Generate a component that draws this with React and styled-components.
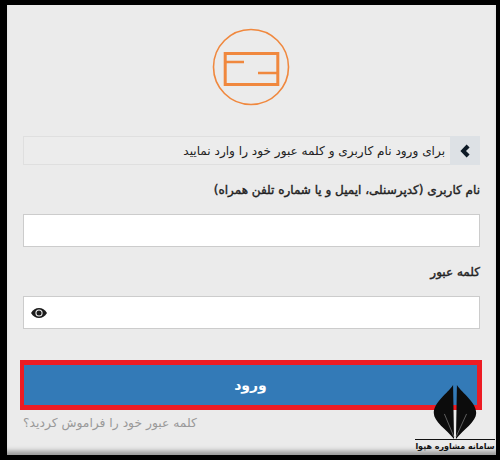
import React from "react";
import styled, { createGlobalStyle } from "styled-components";

const GlobalStyle = createGlobalStyle`
  html, body {
    margin: 0;
    padding: 0;
    background: #000;
  }
  * {
    box-sizing: border-box;
  }
`;

const App = () => {
  return (
    <>
      <GlobalStyle />
      <Page>
        <Panel dir="rtl">
          <LogoWrap>
            <svg width="78" height="78" viewBox="0 0 78 78" fill="none" stroke="#f0883e">
              <circle cx="39" cy="39" r="37.5" strokeWidth="1.6" />
              <rect x="13.2" y="25.5" width="52.6" height="31" strokeWidth="3" />
              <path d="M13 34H32M66 45H46" strokeWidth="2.4" />
            </svg>
          </LogoWrap>
          <Alert>
            <AlertIcon>
              <svg width="14" height="14" viewBox="0 0 14 14" fill="#0d1a26">
                <path d="M8.6 0.6L11.6 3.400 8 7l3.600 3.600-3 2.800L2.400 7z" />
              </svg>
            </AlertIcon>
            <AlertText>برای ورود نام کاربری و کلمه عبور خود را وارد نمایید</AlertText>
          </Alert>
          <Label>نام کاربری (کدپرسنلی، ایمیل و یا شماره تلفن همراه)</Label>
          <Input />
          <Label>کلمه عبور</Label>
          <PasswordInput>
            <svg width="18" height="12" viewBox="0 0 18 12">
              <path d="M1 6c2-3.400 4.800-5 8-5s6 1.600 8 5c-2 3.400-4.800 5-8 5S3 9.400 1 6z" fill="#1c1c1c" />
              <circle cx="9" cy="6" r="3.600" fill="#eee" />
              <circle cx="9" cy="6" r="2.500" fill="#1c1c1c" />
            </svg>
          </PasswordInput>
          <Highlight>
            <Submit>ورود</Submit>
          </Highlight>
          <Forgot>کلمه عبور خود را فراموش کردید؟</Forgot>
        </Panel>
        <Badge>
          <svg width="46" height="54" viewBox="0 0 46 56">
            <path d="M21 0C15 9 1 18 1 29c0 9 13 17 21 27z" fill="#0c0c0c" />
            <path d="M25 0C31 9 45 18 45 29c0 9-13 17-21 27z" fill="#0c0c0c" />
            <path d="M12 30l10 24M35 30L24 54" stroke="#777" strokeWidth="0.8" fill="none" />
          </svg>
          <BadgeText dir="rtl">سامانه مشاوره هپوا</BadgeText>
        </Badge>
      </Page>
    </>
  );
};

export default App;

const Page = styled.div`
  position: relative;
  width: 500px;
  height: 460px;
  padding: 5px 4px 5px 7px;
  background: #000;
  overflow: hidden;
`;

const Panel = styled.div`
  height: 450px;
  padding: 23px 16px 0;
  background: #ebebeb;
  box-shadow: inset 0 -7px 5px -3px #999;
  font-family: "DejaVu Sans", sans-serif;
`;

const LogoWrap = styled.div`
  display: flex;
  justify-content: center;
  height: 108px;
  padding-right: 1px;
`;

const Alert = styled.div`
  display: flex;
  align-items: center;
  height: 29px;
  background: #ececec;
  border: 1px solid #dfdfdf;
`;

const AlertIcon = styled.div`
  display: flex;
  align-items: center;
  justify-content: center;
  width: 30px;
  height: 29px;
  margin: -1px;
  background: #dde1e5;
`;

const AlertText = styled.div`
  padding-right: 6px;
  font-size: 12.100px;
  color: #222;
`;

const Label = styled.div`
  margin-top: 18px;
  height: 31px;
  font-size: 12px;
  -webkit-text-stroke: 0.4px #222;
  color: #222;
`;

const Input = styled.div`
  height: 33px;
  background: #fff;
  border: 1px solid #ccc;
`;

const PasswordInput = styled(Input)`
  display: flex;
  align-items: center;
  justify-content: flex-end;
  padding-left: 6px;
`;

const Highlight = styled.div`
  margin: 31px -2px 0 -3px;
  padding: 5px 5px 5px 4px;
  background: #ed1c24;
`;

const Submit = styled.button`
  display: block;
  width: 100%;
  height: 40px;
  border: 0;
  background: #337ab7;
  color: #fff;
  font-family: "DejaVu Sans", sans-serif;
  font-size: 14px;
  font-weight: bold;
`;

const Forgot = styled.div`
  margin-top: 6px;
  font-size: 12.300px;
  color: #999;
  text-align: left;
`;

const Badge = styled.div`
  position: absolute;
  left: 415px;
  top: 385px;
  width: 80px;
  display: flex;
  flex-direction: column;
  align-items: center;
`;

const BadgeText = styled.div`
  width: 80px;
  border-top: 1px solid #111;
  font-family: "DejaVu Sans", sans-serif;
  font-size: 8px;
  font-weight: bold;
  line-height: 14px;
  text-align: center;
  color: #111;
  white-space: nowrap;
`;
